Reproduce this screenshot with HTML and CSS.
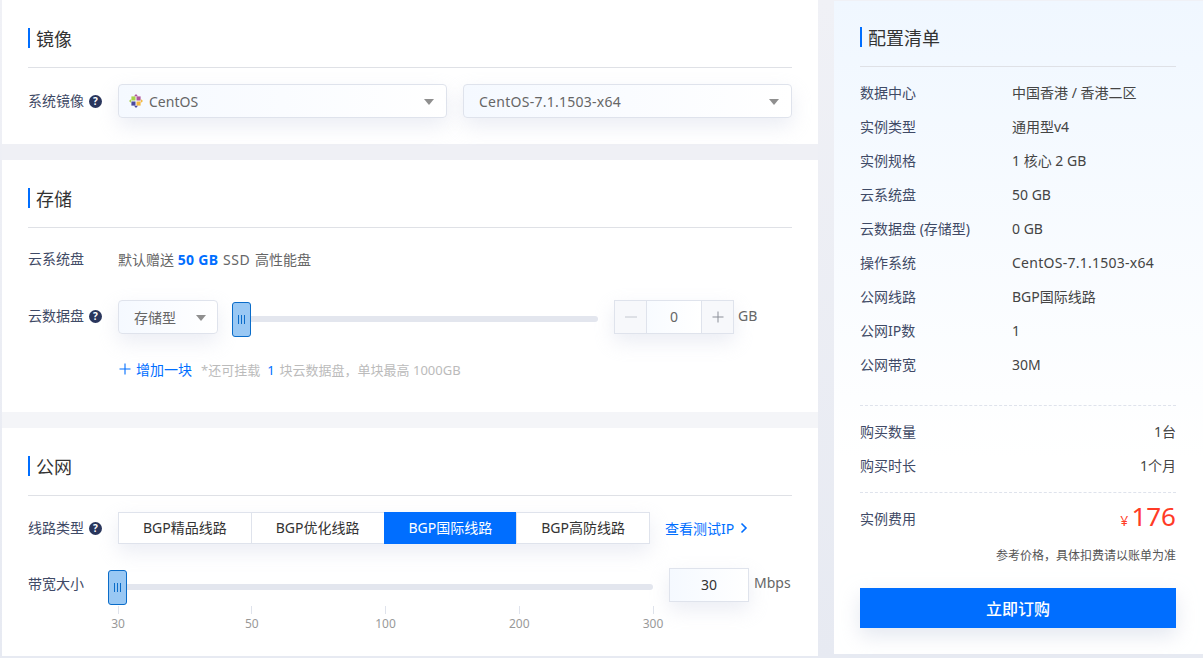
FILE: index.html
```html
<!DOCTYPE html>
<html lang="zh-CN">
<head>
<meta charset="utf-8">
<title>配置清单</title>
<link rel="stylesheet" href="styles.css">
</head>
<body>
<div class="page">
  <main class="main">
    <section class="card card-image">
      <h2 class="title">镜像</h2>
      <div class="row row-first">
        <div class="label">系统镜像<span class="help">?</span></div>
        <div class="select select-wide select-first">
          <svg class="logo" viewBox="0 0 14 14" aria-hidden="true">
            <rect x="2.4" y="2.4" width="4.100" height="4.100" fill="#a9d24a"/>
            <rect x="7.500" y="2.4" width="4.100" height="4.100" fill="#b0589c"/>
            <rect x="2.4" y="7.500" width="4.100" height="4.100" fill="#4c4b9e"/>
            <rect x="7.500" y="7.500" width="4.100" height="4.100" fill="#f5b93f"/>
            <path d="M7 0l2 2.200H5z" fill="#b0589c"/>
            <path d="M14 7l-2.200 2V5z" fill="#f5b93f"/>
            <path d="M7 14l-2-2.200h4z" fill="#4c4b9e"/>
            <path d="M0 7l2.200-2v4z" fill="#a9d24a"/>
          </svg>
          <span>CentOS</span><i class="caret"></i>
        </div>
        <div class="select select-wide select-last"><span class="wide">CentOS-7.1.1503-x64</span><i class="caret"></i></div>
      </div>
    </section>

    <section class="card card-storage">
      <h2 class="title">存储</h2>
      <div class="row row-sys">
        <div class="label">云系统盘</div>
        <div class="gift">默认赠送 <b>50 GB</b> <span class="wide-more">SSD</span> 高性能盘</div>
      </div>
      <div class="row row-disk">
        <div class="label">云数据盘<span class="help">?</span></div>
        <div class="select select-type"><span>存储型</span><i class="caret"></i></div>
        <div class="slider slider-disk">
          <div class="track"></div>
          <div class="handle"><i></i><i></i><i></i></div>
        </div>
        <div class="stepper">
          <span class="step">
            <svg viewBox="0 0 16 16" aria-hidden="true"><path d="M2 8h12" stroke="#c4c8d0"/></svg>
          </span>
          <span class="step-val">0</span>
          <span class="step">
            <svg viewBox="0 0 16 16" aria-hidden="true"><path d="M2.500 8h11M8 2.500v11" stroke="#8b8f98"/></svg>
          </span>
        </div>
        <span class="unit">GB</span>
      </div>
      <div class="row row-add">
        <a class="add">
          <svg viewBox="0 0 12 12" aria-hidden="true"><path d="M0.500 6h11M6 0.500v11" stroke="#006eff" stroke-width="1.100"/></svg>
          增加一块
        </a>
        <span class="hint">*还可挂载<em>1</em>块云数据盘，单块最高 1000GB</span>
      </div>
    </section>

    <section class="card card-net">
      <h2 class="title">公网</h2>
      <div class="row row-line">
        <div class="label">线路类型<span class="help">?</span></div>
        <div class="tabs">
          <span class="tab">BGP精品线路</span>
          <span class="tab">BGP优化线路</span>
          <span class="tab tab-on">BGP国际线路</span>
          <span class="tab">BGP高防线路</span>
        </div>
        <a class="more">查看测试IP
          <svg viewBox="0 0 8 12" aria-hidden="true"><path d="M1.500 1.500L6 6l-4.500 4.500" fill="none" stroke="#006eff" stroke-width="1.600"/></svg>
        </a>
      </div>
      <div class="row row-band">
        <div class="label label-band">带宽大小</div>
        <div class="band-body">
          <div class="slider slider-band">
            <div class="track"></div>
            <div class="handle"><i></i><i></i><i></i></div>
          </div>
          <div class="ticks">
            <span class="tick">30</span><span class="tick">50</span><span class="tick">100</span><span class="tick">200</span><span class="tick">300</span>
          </div>
        </div>
        <div class="band-input">30</div>
        <span class="unit unit-band">Mbps</span>
      </div>
    </section>
  </main>

  <aside class="panel">
    <h2 class="title title-panel">配置清单</h2>
    <dl class="list">
      <div class="item"><dt>数据中心</dt><dd>中国香港 / 香港二区</dd></div>
      <div class="item"><dt>实例类型</dt><dd>通用型v4</dd></div>
      <div class="item"><dt>实例规格</dt><dd>1 核心 2 GB</dd></div>
      <div class="item"><dt>云系统盘</dt><dd>50 GB</dd></div>
      <div class="item"><dt>云数据盘 (存储型)</dt><dd>0 GB</dd></div>
      <div class="item"><dt>操作系统</dt><dd class="wide">CentOS-7.1.1503-x64</dd></div>
      <div class="item"><dt>公网线路</dt><dd>BGP国际线路</dd></div>
      <div class="item"><dt>公网IP数</dt><dd>1</dd></div>
      <div class="item"><dt>公网带宽</dt><dd>30M</dd></div>
    </dl>
    <dl class="list list-buy">
      <div class="item item-between"><dt>购买数量</dt><dd>1台</dd></div>
      <div class="item item-between"><dt>购买时长</dt><dd>1个月</dd></div>
    </dl>
    <div class="fee">
      <span class="fee-label">实例费用</span>
      <span class="price"><small>¥</small>176</span>
    </div>
    <p class="note">参考价格，具体扣费请以账单为准</p>
    <button class="buy" type="button">立即订购</button>
  </aside>
</div>
</body>
</html>
```

FILE: styles.css
```css
* { box-sizing: border-box; }
html, body { margin: 0; padding: 0; }
body {
  width: 1203px;
  height: 658px;
  overflow: hidden;
  background: linear-gradient(180deg, #f0f1f6, #e7eaf2);
  color: #333;
  font-family: "Noto Sans", "Noto Sans CJK SC", sans-serif;
  font-size: 14px;
}
.page { display: flex; align-items: flex-start; padding-left: 2px; }
.main { width: 816px; display: flex; flex-direction: column; gap: 16px; flex: none; }
.card { background: #fff; padding: 28px 26px 0; }
.card-image { height: 144px; box-shadow: 0 16px 0 #eff0f5; }
.card-storage { height: 252px; box-shadow: 0 16px 0 #f4f5f8; }
.card-net { height: 228px; }

.title {
  margin: 0;
  height: 40px;
  padding-left: 8px;
  position: relative;
  border-bottom: 1px solid #dfe1e6;
  font-size: 18px;
  font-weight: 400;
  line-height: 22px;
  color: #333;
}
.title::before {
  content: "";
  position: absolute;
  left: 0;
  top: 0;
  width: 2px;
  height: 20px;
  background: #006eff;
}
.row { display: flex; align-items: center; }
.label { width: 90px; flex: none; color: #3f4a66; line-height: 20px; display: flex; align-items: center; }
.help {
  width: 13px;
  height: 13px;
  margin-left: 5px;
  border-radius: 50%;
  background: #29355c;
  color: #fff;
  font-size: 10px;
  font-weight: 700;
  line-height: 13px;
  text-align: center;
}
.wide { letter-spacing: .26px; }
.wide-more { letter-spacing: .6px; margin: 0 1px; }
.row-first { margin-top: 16px; }
.select {
  height: 34px;
  display: flex;
  align-items: center;
  position: relative;
  border: 1px solid #dfe3ec;
  border-radius: 4px;
  background: linear-gradient(90deg, #f5f9ff, #fff);
  box-shadow: 0 8px 20px rgba(210, 216, 230, .45);
  color: #666;
}
.select-wide { width: 329px; flex: none; padding-left: 10px; }
.select-first { margin-right: 16px; }
.select-last { padding-left: 15px; }
.logo { width: 14px; height: 14px; margin-right: 6px; flex: none; }
.caret {
  position: absolute;
  right: 12px;
  top: 14px;
  width: 0;
  height: 0;
  border-left: 5px solid transparent;
  border-right: 5px solid transparent;
  border-top: 6px solid #8f8f8f;
}
.row-sys { margin-top: 21px; height: 20px; }
.gift { color: #666; }
.gift b { color: #006eff; font-weight: 700; letter-spacing: .3px; }
.row-disk { margin-top: 31px; height: 34px; align-items: flex-start; }
.row-disk .label { height: 32px; }
.select-type { width: 100px; padding-left: 15px; flex: none; }
.select-type .caret { right: 11px; }
.slider { position: relative; }
.slider-disk { width: 366px; margin-left: 14px; height: 34px; flex: none; }
.track {
  position: absolute;
  left: 0;
  right: 0;
  height: 6px;
  border-radius: 3px;
  background: #e3e6ee;
}
.slider-disk .track { top: 16px; }
.handle {
  position: absolute;
  left: 0;
  width: 19px;
  height: 35px;
  display: flex;
  align-items: center;
  justify-content: center;
  gap: 2px;
  background: #99c8f4;
  border: 1px solid #0a6cc9;
  border-radius: 3px;
}
.handle i { width: 1px; height: 9px; background: #0a6cc9; }
.slider-disk .handle { top: 2px; }
.stepper {
  display: flex;
  width: 120px;
  height: 34px;
  margin-left: 16px;
  flex: none;
  border: 1px solid #dfe3ec;
  box-shadow: 0 8px 20px rgba(210, 216, 230, .45);
  background: #f7f8fb;
}
.step { width: 31px; flex: none; display: flex; align-items: center; justify-content: center; }
.step svg { width: 16px; height: 16px; }
.step-val {
  flex: 1;
  text-align: center;
  line-height: 32px;
  color: #666;
  border-left: 1px solid #dfe3ec;
  border-right: 1px solid #dfe3ec;
  background: linear-gradient(90deg, #f8fbff, #fff);
}
.unit { margin-left: 4px; color: #666; line-height: 32px; }
.row-add { margin-top: 25px; height: 20px; padding-left: 90px; }
.add { display: flex; align-items: center; color: #006eff; }
.add svg { width: 12px; height: 12px; margin: 0 5px 0 1px; }
.hint { margin-left: 9px; color: #bbb; font-size: 13px; }
.hint em { font-style: normal; color: #006eff; margin: 0 5px 0 7px; }

.row-line { margin-top: 16px; height: 32px; }
.tabs { display: flex; width: 532px; flex: none; box-shadow: 0 8px 20px rgba(210, 216, 230, .45); }
.tab {
  flex: 1 1 0;
  height: 32px;
  border: 1px solid #dfe3ec;
  margin-left: -1px;
  background: #fff;
  text-align: center;
  line-height: 30px;
  color: #333;
}
.tab:first-child { margin-left: 0; }
.tab-on { background: #006eff; border-color: #006eff; color: #fff; }
.more { margin-left: 15px; color: #006eff; display: flex; align-items: center; }
.more svg { width: 8px; height: 12px; margin-left: 6px; }
.row-band { margin-top: 24px; height: 60px; align-items: flex-start; }
.label-band { padding-top: 6px; }
.band-body { width: 535px; flex: none; }
.slider-band { height: 38px; }
.slider-band .track { top: 16px; }
.slider-band .handle { top: 2px; left: -10px; }
.ticks { display: flex; justify-content: space-between; }
.tick {
  width: 0;
  display: flex;
  flex-direction: column;
  align-items: center;
  color: #999;
  font-size: 12px;
  line-height: 16px;
  white-space: nowrap;
}
.tick::before { content: ""; width: 1px; height: 8px; margin-bottom: 2px; background: #dfe3ec; flex: none; }
.band-input {
  width: 80px;
  height: 34px;
  margin-left: 16px;
  flex: none;
  border: 1px solid #dfe3ec;
  background: linear-gradient(90deg, #f5f9ff, #fff);
  box-shadow: 0 8px 20px rgba(210, 216, 230, .45);
  text-align: center;
  line-height: 32px;
  color: #333;
}
.unit-band { margin-left: 5px; line-height: 30px; }

.panel {
  width: 369px;
  height: 653px;
  margin: 1px 0 0 16px;
  padding: 26px 27px 0 26px;
  flex: none;
  background: linear-gradient(180deg, #f0f7ff, #fff 70%);
}
.list { margin: 8px 0 0; padding-bottom: 24px; border-bottom: 1px dashed #dfe3ec; }
.list-buy { margin-top: 8px; padding-bottom: 10px; }
.item { display: flex; height: 34px; align-items: center; }
.item dt { width: 152px; flex: none; color: #3f4a66; }
.item dd { margin: 0; color: #444; }
.item-between { justify-content: space-between; }
.fee { display: flex; justify-content: space-between; align-items: center; height: 50px; }
.fee-label { color: #3f4a66; }
.price { color: #ff3b26; font-size: 26px; line-height: 32px; }
.price small { font-size: 14px; margin-right: 3px; }
.note { margin: 3px 0 0; text-align: right; font-size: 12px; line-height: 20px; color: #555; }
.buy {
  display: block;
  width: 100%;
  height: 40px;
  margin-top: 22px;
  border: 0;
  background: #006eff;
  color: #fff;
  font: inherit;
  font-size: 16px;
  font-weight: 500;
  box-shadow: 0 8px 20px rgba(210, 216, 230, .6);
}
```
